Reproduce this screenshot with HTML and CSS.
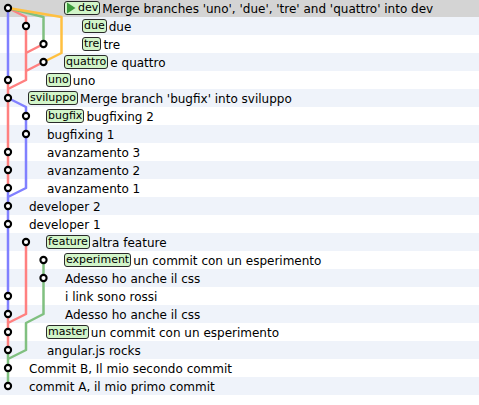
FILE: index.html
```html
<!DOCTYPE html>
<html>
<head>
<meta charset="utf-8">
<link rel="stylesheet" href="styles.css">
</head>
<body>
<div class="history">
  <svg class="graph" width="100" height="396" viewBox="0 -1 100 396">
    <g class="lines" fill="none" stroke-width="2.5" stroke-linejoin="round" stroke-linecap="butt">
      <path stroke="#8080ff" d="M8 8 V80 M8 98 L26 107 V188 L8 197 M8 188 V314"/>
      <path stroke="#ff8080" d="M8 8 L26 17 V80 L8 89 V98 M43.5 44 L26 53 M43.5 62 L26 71 M8 80 V188 M26 242 V314 L8 323 V350 M8 314 V323"/>
      <path stroke="#80c080" d="M8 8 L43.5 17 V44 M43.5 260 V314 L26 323 V350 L8 359 V386 M8 350 V359"/>
      <path stroke="#ffc040" d="M8 8 L61.5 17 V53 L43.5 62"/>
    </g>
    <g class="dots" fill="#fff" stroke="#000" stroke-width="2.1">
      <circle cx="8" cy="8" r="3.1"/>
      <circle cx="26" cy="26" r="3.1"/>
      <circle cx="43.5" cy="44" r="3.1"/>
      <circle cx="43.5" cy="62" r="3.1"/>
      <circle cx="8" cy="80" r="3.1"/>
      <circle cx="8" cy="98" r="3.1"/>
      <circle cx="26" cy="116" r="3.1"/>
      <circle cx="26" cy="134" r="3.1"/>
      <circle cx="8" cy="152" r="3.1"/>
      <circle cx="8" cy="170" r="3.1"/>
      <circle cx="8" cy="188" r="3.1"/>
      <circle cx="8" cy="206" r="3.1"/>
      <circle cx="8" cy="224" r="3.1"/>
      <circle cx="26" cy="242" r="3.1"/>
      <circle cx="43.5" cy="260" r="3.1"/>
      <circle cx="43.5" cy="278" r="3.1"/>
      <circle cx="8" cy="296" r="3.1"/>
      <circle cx="8" cy="314" r="3.1"/>
      <circle cx="8" cy="332" r="3.1"/>
      <circle cx="8" cy="350" r="3.1"/>
      <circle cx="8" cy="368" r="3.1"/>
      <circle cx="8" cy="386" r="3.1"/>
    </g>
  </svg>
  <div class="rows">
    <div class="row selected indent-3"><span class="ref"><svg class="head-icon" width="10" height="12" viewBox="0 0 10 12"><polygon points="1,0.5 9.5,6 1,11.5" fill="#3c9c3c"/></svg>dev</span><span class="msg">Merge branches 'uno', 'due', 'tre' and 'quattro' into dev</span></div>
    <div class="row indent-4"><span class="ref">due</span><span class="msg">due</span></div>
    <div class="row indent-4"><span class="ref">tre</span><span class="msg">tre</span></div>
    <div class="row indent-3"><span class="ref">quattro</span><span class="msg">e quattro</span></div>
    <div class="row indent-2"><span class="ref">uno</span><span class="msg">uno</span></div>
    <div class="row indent-1"><span class="ref">sviluppo</span><span class="msg">Merge branch 'bugfix' into sviluppo</span></div>
    <div class="row indent-2"><span class="ref">bugfix</span><span class="msg">bugfixing 2</span></div>
    <div class="row indent-2"><span class="msg">bugfixing 1</span></div>
    <div class="row indent-2"><span class="msg">avanzamento 3</span></div>
    <div class="row indent-2"><span class="msg">avanzamento 2</span></div>
    <div class="row indent-2"><span class="msg">avanzamento 1</span></div>
    <div class="row indent-1"><span class="msg">developer 2</span></div>
    <div class="row indent-1"><span class="msg">developer 1</span></div>
    <div class="row indent-2"><span class="ref">feature</span><span class="msg">altra feature</span></div>
    <div class="row indent-3"><span class="ref">experiment</span><span class="msg">un commit con un esperimento</span></div>
    <div class="row indent-3"><span class="msg">Adesso ho anche il css</span></div>
    <div class="row indent-3"><span class="msg">i link sono rossi</span></div>
    <div class="row indent-3"><span class="msg">Adesso ho anche il css</span></div>
    <div class="row indent-2"><span class="ref">master</span><span class="msg">un commit con un esperimento</span></div>
    <div class="row indent-2"><span class="msg">angular.js rocks</span></div>
    <div class="row indent-1"><span class="msg">Commit B, Il mio secondo commit</span></div>
    <div class="row indent-1"><span class="msg">commit A, il mio primo commit</span></div>
  </div>
</div>
</body>
</html>
```

FILE: styles.css
```css
html, body {
  margin: 0;
  padding: 0;
  background: #ffffff;
}

body {
  width: 479px;
  height: 405px;
  overflow: hidden;
  font-family: "DejaVu Sans", "Noto Sans", sans-serif;
  font-size: 12px;
  color: #000;
}

.history {
  position: relative;
  margin-top: -1px;
}

.graph {
  position: absolute;
  left: 0;
  top: 0;
}

.rows {
  display: flex;
  flex-direction: column;
}

.row {
  display: flex;
  align-items: center;
  height: 18px;
  line-height: 18px;
  white-space: nowrap;
  background: #ffffff;
}

.row:nth-child(even) {
  background: #eff3fa;
}

.row.selected {
  background: #d4d4d4;
}

.indent-1 { padding-left: 28px; }
.indent-2 { padding-left: 46px; }
.indent-3 { padding-left: 64px; }
.indent-4 { padding-left: 82px; }

.ref {
  display: inline-flex;
  align-items: center;
  box-sizing: border-box;
  height: 14px;
  padding: 0 1px;
  margin-right: 2px;
  border: 1px solid #2a2a2a;
  border-radius: 3px;
  background: #d2f5c9;
  font-size: 11px;
  line-height: 12px;
}

.head-icon {
  display: block;
  margin-right: 2px;
}

.msg {
  padding-top: 1px;
}

.msg:first-child {
  margin-left: 1px;
}
```
